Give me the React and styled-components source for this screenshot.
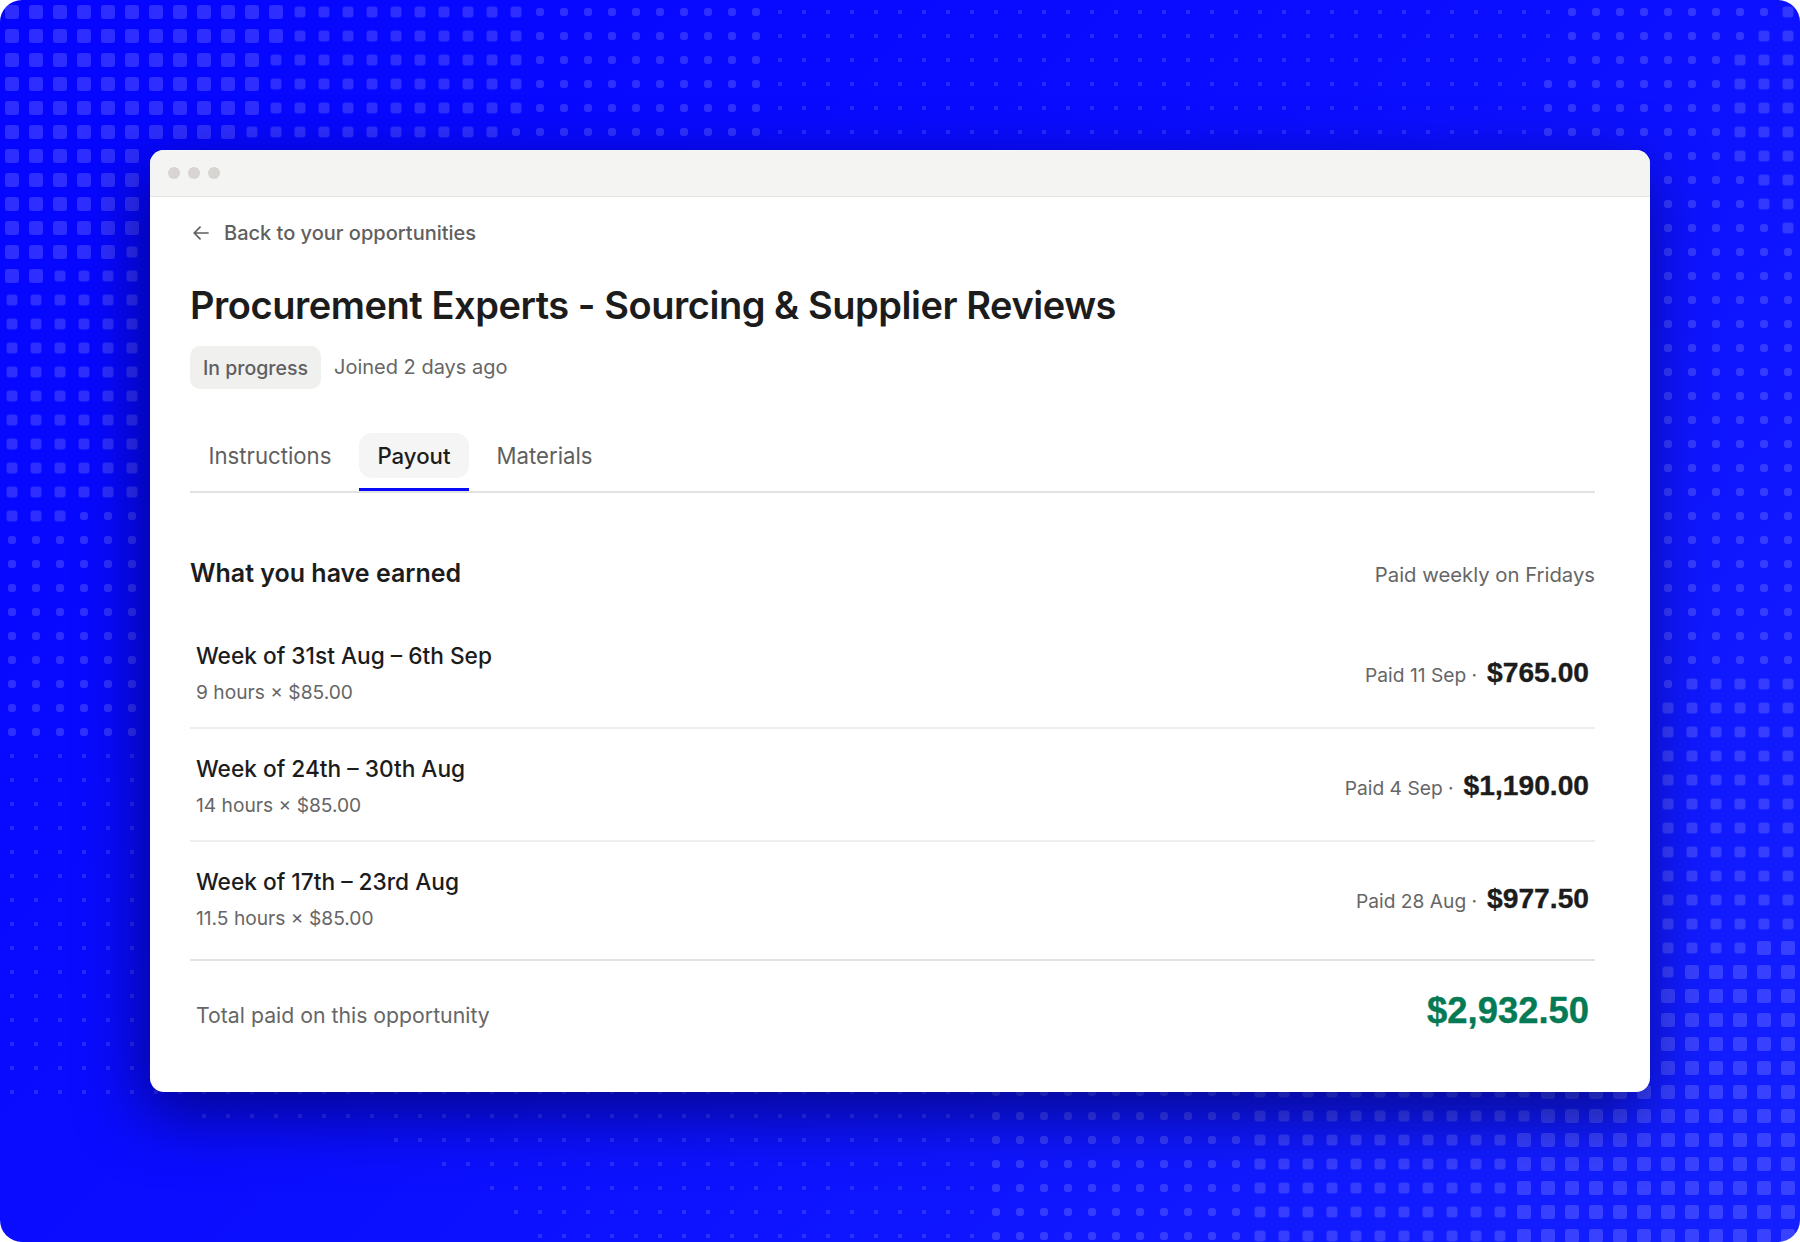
import React from "react";
import styled, { createGlobalStyle } from "styled-components";

const PITCH = 24;

// sizes read off the reference, the dots step down in bands from the corners
const dotSize = (i, j) => {
  if (j >= 45) {
    const start = { 45: 0, 46: 8, 47: 16, 48: 18, 49: 20, 50: 21, 51: 22 }[j];
    if (i < start) return 0;
    if (i <= 40) return 4;
    if (i <= 51) return 8;
    if (i <= (j <= 46 ? 63 : 62)) return 11;
    return 14;
  }
  if (j <= 5) {
    const big = j <= 1 ? 11 : j <= 4 ? 10 : 9;
    if (i <= big) return 14;
    if (i <= (j <= 4 ? 21 : 20)) return 11;
    if (i <= 31) return 8;
    if (i >= (j === 0 ? 74 : j === 1 ? 73 : 72)) return 11;
    if (i >= (j <= 2 ? 65 : 64)) return 8;
    return 4;
  }
  if (i <= 5) {
    if (j <= 9) return 14;
    if (j === 10) return i <= 4 ? 14 : 11;
    if (j === 11) return i <= 1 ? 14 : 11;
    if (j <= 20) return 11;
    if (j === 21) return i <= 2 ? 11 : 8;
    return j <= 30 ? 8 : 4;
  }
  if (i >= 69) {
    if (j === 6) return i >= 72 ? 11 : 8;
    if (j <= 8) return i >= 73 ? 11 : 8;
    if (j === 9) return i >= 74 ? 11 : 8;
    if (j <= 27) return 8;
    if (j === 28) return i >= 70 ? 11 : 8;
    if (j <= 38) return 11;
    if (j === 39) return i >= 73 ? 14 : 11;
    if (j === 40) return i >= 70 ? 14 : 11;
    return 14;
  }
  return 0;
};

const dots = [];
for (let j = 0; j < 52; j++) {
  for (let i = 0; i < 75; i++) {
    const size = dotSize(i, j);
    if (size) dots.push({ x: 12 + i * PITCH, y: 12 + j * PITCH, size });
  }
}

const weeks = [
  { title: "Week of 31st Aug – 6th Sep", sub: "9 hours × $85.00", paid: "Paid 11 Sep ·", amount: "$765.00" },
  { title: "Week of 24th – 30th Aug", sub: "14 hours × $85.00", paid: "Paid 4 Sep ·", amount: "$1,190.00" },
  { title: "Week of 17th – 23rd Aug", sub: "11.5 hours × $85.00", paid: "Paid 28 Aug ·", amount: "$977.50" },
];

const App = () => (
  <Page>
    <GlobalStyle />
    <DotField viewBox="0 0 1800 1242" aria-hidden="true">
      {dots.map((d) => (
        <rect
          key={`${d.x}-${d.y}`}
          x={d.x - d.size / 2}
          y={d.y - d.size / 2}
          width={d.size}
          height={d.size}
          rx={d.size >= 8 ? 3 : 1}
          fill="#ffffff"
          fillOpacity={d.size === 4 ? 0.13 : 0.16}
        />
      ))}
    </DotField>
    <Card>
      <TitleBar>
        <WindowDot />
        <WindowDot />
        <WindowDot />
      </TitleBar>
      <Body>
        <BackLink>
          <svg width="16" height="14" viewBox="0 0 16 14" fill="none">
            <path d="M15 7H1.5M7 1.2 1.2 7 7 12.8" stroke="#5f5f5f" strokeWidth="1.7" strokeLinecap="round" strokeLinejoin="round" />
          </svg>
          Back to your opportunities
        </BackLink>
        <Title>Procurement Experts - Sourcing &amp; Supplier Reviews</Title>
        <StatusRow>
          <Badge>In progress</Badge>
          <Muted>Joined 2 days ago</Muted>
        </StatusRow>
        <Tabs>
          <Tab>Instructions</Tab>
          <Tab $active>Payout</Tab>
          <Tab>Materials</Tab>
        </Tabs>
        <SectionHead>
          <SectionTitle>What you have earned</SectionTitle>
          <Schedule>Paid weekly on Fridays</Schedule>
        </SectionHead>
        <WeekList>
          {weeks.map((w) => (
            <WeekRow key={w.title}>
              <div>
                <WeekTitle>{w.title}</WeekTitle>
                <WeekSub>{w.sub}</WeekSub>
              </div>
              <PaidInfo>
                <PaidDate>{w.paid}</PaidDate>
                <Amount>{w.amount}</Amount>
              </PaidInfo>
            </WeekRow>
          ))}
        </WeekList>
        <TotalRow>
          <TotalLabel>Total paid on this opportunity</TotalLabel>
          <TotalAmount>$2,932.50</TotalAmount>
        </TotalRow>
      </Body>
    </Card>
  </Page>
);

export default App;

const GlobalStyle = createGlobalStyle`
  html, body {
    margin: 0;
    padding: 0;
    background: #ffffff;
  }
  body {
    font-family: Inter, "Liberation Sans", sans-serif;
    color: #1c1c1c;
  }
`;

const Page = styled.div`
  position: relative;
  box-sizing: border-box;
  width: 1800px;
  height: 1242px;
  padding: 150px 150px 0;
  border-radius: 22px;
  overflow: hidden;
  background: linear-gradient(135deg, #0505ff 0%, #0a0dff 45%, #1420ff 100%);
`;

const DotField = styled.svg`
  position: absolute;
  inset: 0;
  width: 1800px;
  height: 1242px;
`;

const Card = styled.div`
  position: relative;
  height: 942px;
  border-radius: 14px;
  background: #ffffff;
  overflow: hidden;
  box-shadow: -6px 22px 64px rgba(0, 0, 70, 0.62);
`;

const TitleBar = styled.div`
  display: flex;
  align-items: center;
  gap: 8px;
  box-sizing: border-box;
  height: 47px;
  padding-left: 18px;
  background: #f4f4f3;
  border-bottom: 1px solid #e3e3e1;
`;

const WindowDot = styled.span`
  width: 12px;
  height: 12px;
  border-radius: 50%;
  background: #d8d4d2;
`;

const Body = styled.div`
  padding: 24px 55px 0 40px;
`;

const BackLink = styled.div`
  display: flex;
  align-items: center;
  gap: 15px;
  height: 24px;
  padding-left: 3px;
  font-size: 20px;
  font-weight: 500;
  color: #5f5f5f;
`;

const Title = styled.h1`
  margin: 36px 0 0;
  font-size: 38px;
  line-height: 48px;
  font-weight: 600;
  letter-spacing: -0.46px;
  color: #1c1c1c;
`;

const StatusRow = styled.div`
  display: flex;
  align-items: center;
  gap: 13px;
  margin-top: 17px;
`;

const Badge = styled.span`
  display: flex;
  align-items: center;
  height: 43px;
  padding: 0 13px;
  border-radius: 10px;
  background: #f0f0ef;
  font-size: 19.5px;
  font-weight: 500;
  color: #5f5f5f;
`;

const Muted = styled.span`
  padding-bottom: 2px;
  font-size: 20px;
  color: #666666;
`;

const Tabs = styled.div`
  display: flex;
  align-items: flex-start;
  gap: 9px;
  height: 58px;
  margin-top: 44px;
  border-bottom: 2px solid #e2e2e0;
`;

const Tab = styled.div`
  position: relative;
  display: flex;
  align-items: center;
  height: 45px;
  padding: 0 18.5px;
  border-radius: 13px;
  font-size: 22.2px;
  color: ${(p) => (p.$active ? "#1c1c1c" : "#5f5f5f")};
  font-weight: ${(p) => (p.$active ? 500 : 400)};
  background: ${(p) => (p.$active ? "#f5f5f5" : "transparent")};

  ${(p) =>
    p.$active &&
    `
    &::after {
      content: "";
      position: absolute;
      left: 0;
      right: 0;
      bottom: -13px;
      height: 3px;
      background: #0a0aff;
    }
  `}
`;

const SectionHead = styled.div`
  display: flex;
  align-items: center;
  justify-content: space-between;
  height: 40px;
  margin-top: 60px;
`;

const SectionTitle = styled.h2`
  margin: 0;
  font-size: 25px;
  font-weight: 600;
  color: #1c1c1c;
`;

const Schedule = styled.span`
  padding-top: 2px;
  font-size: 20.3px;
  color: #666666;
`;

const WeekList = styled.div`
  margin-top: 23px;
`;

const WeekRow = styled.div`
  display: flex;
  align-items: center;
  justify-content: space-between;
  box-sizing: border-box;
  height: 113px;
  padding: 4px 6px 0;
  border-bottom: 2px solid #eeeeee;

  &:last-child {
    height: 119px;
    padding-bottom: 6px;
    border-bottom-color: #e2e2e0;
  }
`;

const WeekTitle = styled.div`
  font-size: 22.7px;
  line-height: 28px;
  font-weight: 500;
  color: #1c1c1c;
`;

const WeekSub = styled.div`
  margin-top: 9px;
  font-size: 19.2px;
  line-height: 26px;
  color: #666666;
`;

const PaidInfo = styled.div`
  display: flex;
  align-items: baseline;
  gap: 10px;
  margin-top: -3px;
`;

const PaidDate = styled.span`
  font-size: 19.2px;
  color: #666666;
`;

const Amount = styled.span`
  font-family: "Liberation Sans", Arial, sans-serif;
  font-size: 28.2px;
  font-weight: 700;
  color: #1c1c1c;
  -webkit-text-stroke: 0.35px #1c1c1c;
`;

const TotalRow = styled.div`
  display: flex;
  align-items: center;
  justify-content: space-between;
  height: 100px;
  padding: 0 6px;
`;

const TotalLabel = styled.span`
  padding-top: 8px;
  font-size: 21.25px;
  color: #666666;
`;

const TotalAmount = styled.span`
  font-family: "Liberation Sans", Arial, sans-serif;
  font-size: 36.4px;
  font-weight: 700;
  color: #047a55;
  -webkit-text-stroke: 0.4px #047a55;
`;
